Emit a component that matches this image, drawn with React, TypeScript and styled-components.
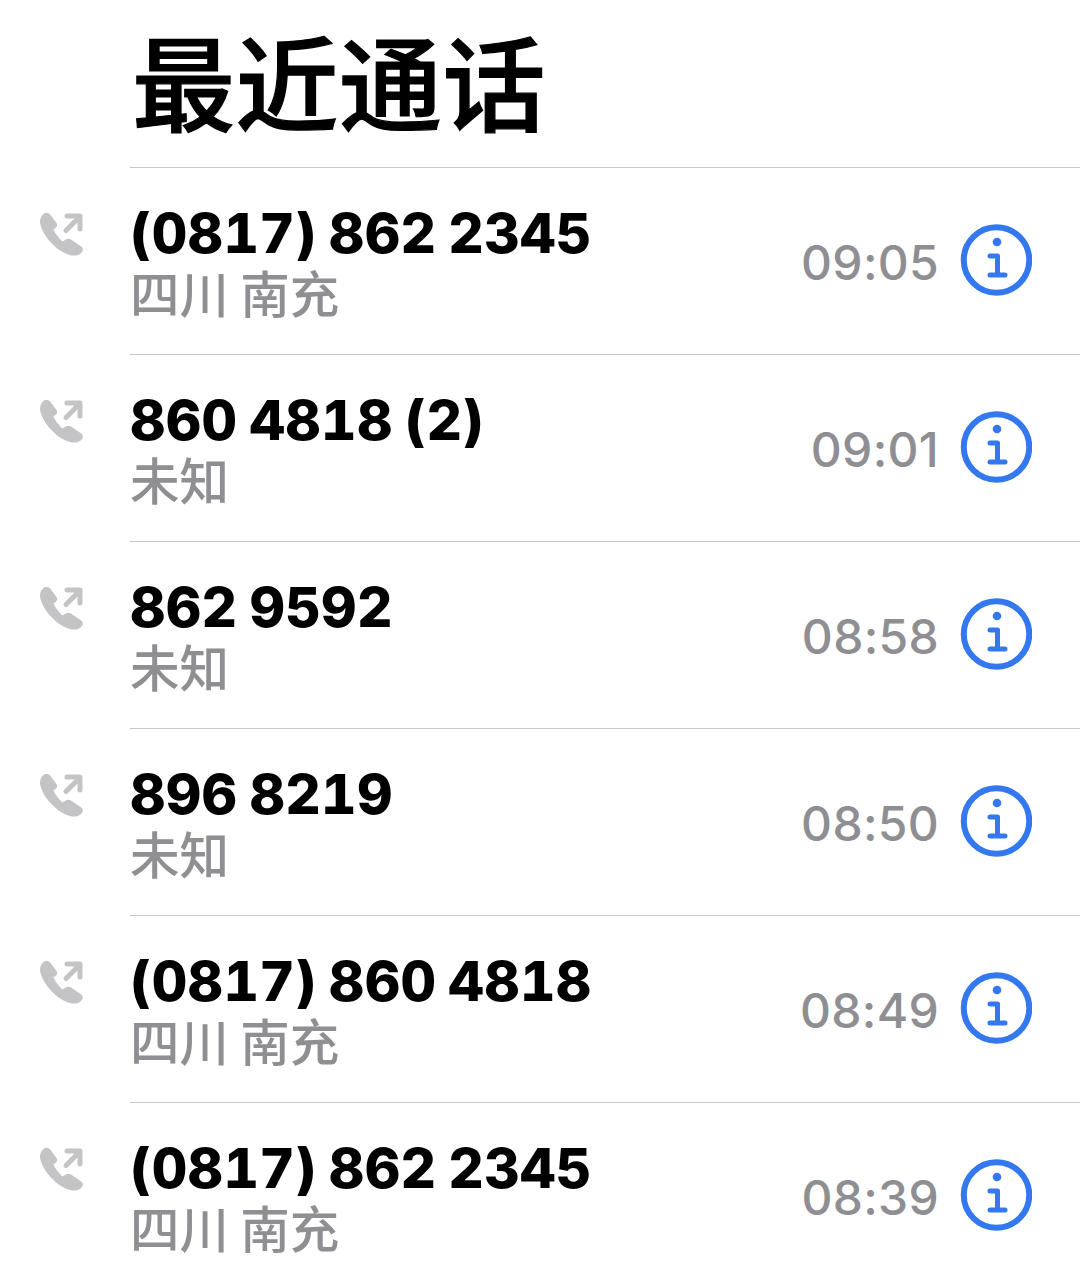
import React from "react";
import styled, { createGlobalStyle } from "styled-components";

const Global = createGlobalStyle`
  html, body { margin: 0; padding: 0; background: #fff; }
  body { font-family: Inter, "Noto Sans CJK SC", sans-serif; }
`;
const Page = styled.div`
  width: 1080px;
  height: 1288px;
  overflow: hidden;
  background: #fff;
`;
const Title = styled.h1`
  margin: 0;
  height: 167px;
  box-sizing: border-box;
  padding: 19px 0 0 132px;
  font: 500 103px/122px "Noto Sans CJK SC", sans-serif;
  -webkit-text-stroke: 1.200px #000;
  letter-spacing: 0.5px;
  color: #000;
`;
const Row = styled.div`
  height: 187px;
  margin-left: 130px;
  border-top: 1px solid #c8c8cc;
  box-sizing: border-box;
  display: flex;
  align-items: flex-start;
  position: relative;
`;
const CallIcon = styled.svg`
  position: absolute;
  left: -90px;
  top: 44px;
  width: 46px;
  height: 46px;
`;
const Texts = styled.div`
  flex: 1;
  min-width: 0;
  padding-top: 35px;
`;
const Name = styled.div`
  font: 800 55px/60px Inter, sans-serif;
  font-variant-numeric: tabular-nums;
  letter-spacing: 0.3px;
  word-spacing: -3px;
  color: #000;
  white-space: nowrap;
`;
const Place = styled.div`
  font: 500 49.500px/58px "Noto Sans CJK SC", sans-serif;
  color: #8e8e93;
  white-space: nowrap;
`;
const Time = styled.div`
  font: 500 48px/58px Inter, sans-serif;
  letter-spacing: 0.3px;
  color: #8e8e93;
  margin-top: 66px;
  margin-right: 21px;
`;
const InfoIcon = styled.svg`
  width: 72px;
  height: 72px;
  margin-top: 56px;
  margin-right: 48px;
  flex: none;
`;

const Phone = () => (
  <CallIcon viewBox="0 0 46 46">
    <path
      d="M3 2.500C5 .5 8.500.5 10.500 3L16.500 11C17.500 12.500 17.500 14 16 15.500L13.500 17.500C15 21 19 26.500 22.500 29.500L25 28C27 26.500 29 26.500 31 27.500L40.500 34C43 35.500 43.500 38 42 40C39.500 43 36 44 32 43.500C22 42 12 33 6 24.500C2 18.500 0 13 0 9.500C0 7 1 4.500 3 2.500Z"
      fill="#c4c4c6"
    />
    <path
      d="M26 18.500 39 5.500M27 4h13v13"
      fill="none"
      stroke="#c4c4c6"
      strokeWidth="5"
      strokeLinecap="round"
      strokeLinejoin="round"
    />
  </CallIcon>
);

const Info = () => (
  <InfoIcon viewBox="0 0 72 72">
    <circle cx="36.500" cy="36" r="32.750" fill="none" stroke="#3478f0" strokeWidth="6" />
    <circle cx="37" cy="18" r="4.300" fill="#3478f0" />
    <path
      d="M30 32h7.500v19M30 51h15"
      fill="none"
      stroke="#3478f0"
      strokeWidth="5"
      strokeLinecap="round"
      strokeLinejoin="round"
    />
  </InfoIcon>
);

const calls = [
  { name: "(0817) 862 2345", place: "四川 南充", time: "09:05" },
  { name: "860 4818 (2)", place: "未知", time: "09:01" },
  { name: "862 9592", place: "未知", time: "08:58" },
  { name: "896 8219", place: "未知", time: "08:50" },
  { name: "(0817) 860 4818", place: "四川 南充", time: "08:49" },
  { name: "(0817) 862 2345", place: "四川 南充", time: "08:39" },
];

export default function App() {
  return (
    <Page>
      <Global />
      <Title>最近通话</Title>
      {calls.map((c) => (
        <Row key={c.time}>
          <Phone />
          <Texts>
            <Name>{c.name}</Name>
            <Place>{c.place}</Place>
          </Texts>
          <Time>{c.time}</Time>
          <Info />
        </Row>
      ))}
    </Page>
  );
}
